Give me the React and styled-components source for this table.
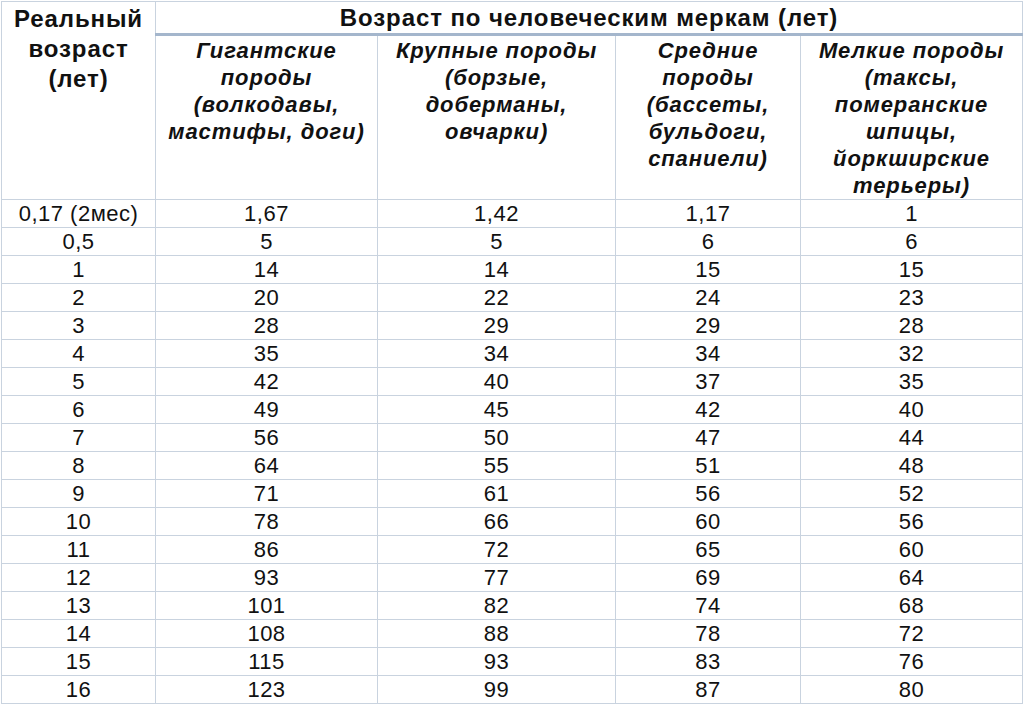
import React from 'react'
import styled, { createGlobalStyle } from 'styled-components'

const GlobalStyle = createGlobalStyle`
  body {
    margin: 0;
    background: #fff;
    font-family: "Liberation Sans", Arial, sans-serif;
    color: #111;
  }
`

const Page = styled.div`
  padding: 1px 0 0 1px;
`

const Table = styled.table`
  border-collapse: collapse;
  table-layout: fixed;
  width: 1021px;
`

const HeadCell = styled.th`
  border: 1px solid #c9d3df;
  padding: 2px 2px 0;
  font-size: 24px;
  line-height: 30px;
  letter-spacing: 0.9px;
  font-weight: bold;
  text-align: center;
  vertical-align: top;
`

const GroupCell = styled(HeadCell)`
  height: 28px;
  border-bottom: 3px solid #a4b6cc;
  padding-top: 1px;
`

const BreedCell = styled.th`
  border: 1px solid #c9d3df;
  border-top: none;
  height: 160px;
  padding: 1px 2px 0;
  font-size: 22px;
  line-height: 27px;
  letter-spacing: 0.9px;
  font-weight: bold;
  font-style: italic;
  text-align: center;
  vertical-align: top;
`

const Row = styled.tr`
  height: 28px;
`

const Cell = styled.td`
  border: 1px solid #c9d3df;
  padding: 0;
  font-size: 22px;
  line-height: 26px;
  letter-spacing: 0.5px;
  text-align: center;
  vertical-align: middle;
`

const breeds = [
  'Гигантские породы (волкодавы, мастифы, доги)',
  'Крупные породы (борзые, доберманы, овчарки)',
  'Средние породы (бассеты, бульдоги, спаниели)',
  'Мелкие породы (таксы, померанские шпицы, йоркширские терьеры)',
]

const rows = [
  ['0,17 (2мес)', '1,67', '1,42', '1,17', '1'],
  ['0,5', '5', '5', '6', '6'],
  ['1', '14', '14', '15', '15'],
  ['2', '20', '22', '24', '23'],
  ['3', '28', '29', '29', '28'],
  ['4', '35', '34', '34', '32'],
  ['5', '42', '40', '37', '35'],
  ['6', '49', '45', '42', '40'],
  ['7', '56', '50', '47', '44'],
  ['8', '64', '55', '51', '48'],
  ['9', '71', '61', '56', '52'],
  ['10', '78', '66', '60', '56'],
  ['11', '86', '72', '65', '60'],
  ['12', '93', '77', '69', '64'],
  ['13', '101', '82', '74', '68'],
  ['14', '108', '88', '78', '72'],
  ['15', '115', '93', '83', '76'],
  ['16', '123', '99', '87', '80'],
]

const widths = [154, 222, 238, 185, 222]

export default function App() {
  return (
    <Page>
      <GlobalStyle />
      <Table>
        <colgroup>
          {widths.map((w, i) => (
            <col key={i} style={{ width: w }} />
          ))}
        </colgroup>
        <thead>
          <tr>
            <HeadCell rowSpan={2}>
              Реальный
              <br />
              возраст
              <br />
              (лет)
            </HeadCell>
            <GroupCell colSpan={4}>Возраст по человеческим меркам (лет)</GroupCell>
          </tr>
          <tr>
            {breeds.map((b) => (
              <BreedCell key={b}>{b}</BreedCell>
            ))}
          </tr>
        </thead>
        <tbody>
          {rows.map((r) => (
            <Row key={r[0]}>
              {r.map((v, i) => (
                <Cell key={i}>{v}</Cell>
              ))}
            </Row>
          ))}
        </tbody>
      </Table>
    </Page>
  )
}
